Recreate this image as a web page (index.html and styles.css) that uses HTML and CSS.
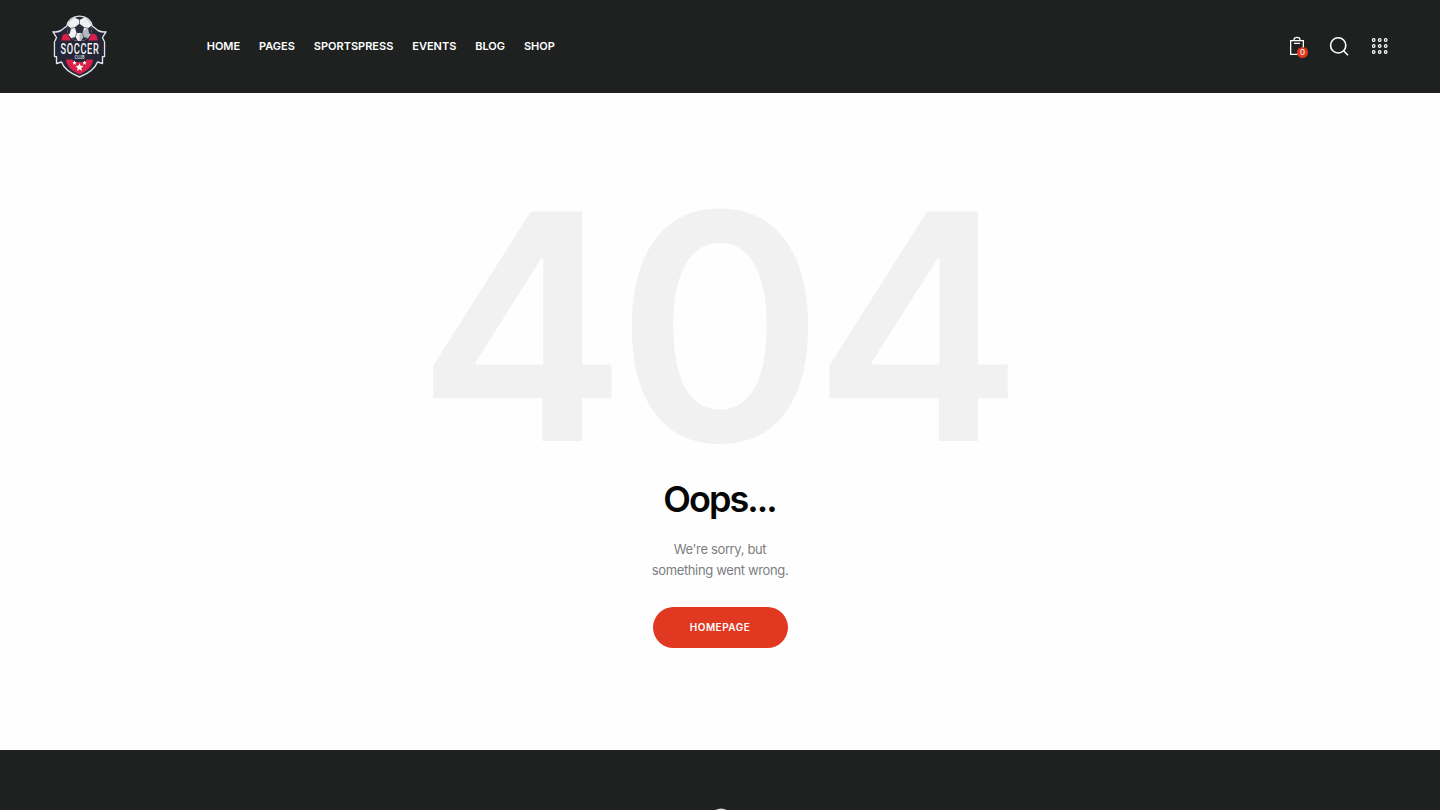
FILE: index.html
```html
<!DOCTYPE html>
<html lang="en">
<head>
<meta charset="utf-8">
<title>Soccer Club – Page not found</title>
<link rel="stylesheet" href="styles.css">
</head>
<body>
<header class="header">
  <a class="logo" aria-label="Soccer Club">
    <svg width="56" height="64" viewBox="0 0 56 64">
      <path d="M28.5 1.2C22 1.2 17 5 15.8 11L10 15.5Q6 17.5 2 16.8L5.5 22.5L3.5 27V41.5H5.5V48.5L10.5 47C13 54 21 59 28.5 62C36 59 44 54 46.5 47L51.5 48.5V41.5H53.5V27L51.5 22.5L55 16.8Q51 17.5 47 15.5L41.2 11C40 5 35 1.2 28.5 1.2Z" fill="#242638" stroke="#dfe2e8" stroke-width="1.4" stroke-linejoin="round"/>
      <path d="M10 25.5L12 19.5L16 18.5L20 25.5ZM47 25.5L45 19.5L41 18.5L37 25.5Z" fill="#d81f49"/>
      <path d="M15 44.5H21L24 47H33L36 44.5H42C42 51 36 56 28.5 59.5C21 56 15 51 15 44.5Z" fill="#d92049"/>
      <circle cx="28.5" cy="14" r="12.3" fill="#f1f1f2"/>
      <path d="M33 15L40.5 12.5Q41 20 35.5 24L28.5 26V19.5Z" fill="#b4b9bf"/>
      <path d="M28.5 8.8L33.2 12.3L31.4 18H25.6L23.8 12.3ZM24 2.8Q28.5 .8 33 2.8L28.5 5ZM16.3 10.5L20 13.3L18.8 18.8L17 19Q15.6 15 16.3 10.5ZM40.7 10.5L37 13.3L38.2 18.8L40 19Q41.4 15 40.7 10.5ZM20.5 23L24.5 22L27 26Q23 26 20.5 23ZM36.5 23L32.5 22L30 26Q34 26 36.5 23Z" fill="#2b2c3b"/>
      <path d="M28.5 4.5V9M20 13.3L24 12.5M37 13.3L33 12.5M25.8 17.8L24 22.5M31.2 17.8L33 22.5" stroke="#555966" stroke-width=".8"/>
      <path d="M4.5 26H52.5V41H4.5Z" fill="#242638"/>
      <text class="crest-name" transform="translate(9.5 39) scale(.66 1)" textLength="58">SOCCER</text>
      <text class="crest-sub" x="23.5" y="44" textLength="10" lengthAdjust="spacingAndGlyphs">CLUB</text>
      <path d="M28.5 48L29.6 50.8L32.5 51L30.3 52.9L31 56L28.5 54.3L26 56L26.7 52.9L24.5 51L27.4 50.8Z" fill="#fff"/>
      <path d="M23.5 45.5L24.1 47L25.5 47.2L24.5 48.3L24.7 49.8L23.5 49L22.3 49.8L22.5 48.3L21.5 47.2L22.9 47ZM33.5 45.5L34.1 47L35.5 47.2L34.5 48.3L34.7 49.8L33.5 49L32.3 49.8L32.5 48.3L31.5 47.2L32.9 47Z" fill="#fff"/>
    </svg>
  </a>
  <nav class="nav">
    <a>HOME</a><a>PAGES</a><a>SPORTSPRESS</a><a>EVENTS</a><a>BLOG</a><a>SHOP</a>
  </nav>
  <div class="tools">
    <a class="cart" aria-label="Cart">
      <svg width="16" height="20" viewBox="0 0 16 20" fill="none" stroke="#fff" stroke-width="1.3">
        <path d="M1.65 4.65H14.35V18.35H1.65ZM5 4.6V3.8Q5 1.4 8 1.4Q11 1.4 11 3.8V4.6M5 7.4H11"/>
      </svg>
      <span class="badge">0</span>
    </a>
    <svg class="search" width="20" height="20" viewBox="0 0 20 20" fill="none" stroke="#fff" stroke-width="1.6"><circle cx="9.2" cy="9.4" r="7.6"/><path d="M14.6 14.8L19 19.2"/></svg>
    <svg class="dots" width="16" height="16" viewBox="0 0 16 16" fill="none" stroke="#fff" stroke-width="1.2">
      <circle cx="1.7" cy="2" r="1.3"/><circle cx="7.7" cy="2" r="1.3"/><circle cx="13.7" cy="2" r="1.3"/>
      <circle cx="1.7" cy="8" r="1.3"/><circle cx="7.7" cy="8" r="1.3"/><circle cx="13.7" cy="8" r="1.3"/>
      <circle cx="1.7" cy="14" r="1.3"/><circle cx="7.7" cy="14" r="1.3"/><circle cx="13.7" cy="14" r="1.3"/>
    </svg>
  </div>
</header>
<main class="main">
  <h1 class="code">404</h1>
  <h2 class="title">Oops...</h2>
  <p class="message">We're sorry, but<br>something went wrong.</p>
  <a class="button">HOMEPAGE</a>
</main>
<footer class="footer">
  <svg width="24" height="24" viewBox="0 0 24 24"><circle cx="12" cy="12" r="11.5" fill="#d7d9d9"/></svg>
</footer>
</body>
</html>
```
FILE: styles.css
```css
* { box-sizing: border-box; }
body {
  margin: 0;
  height: 810px;
  overflow: hidden;
  background: #fefefe;
  font-family: Inter, "Liberation Sans", sans-serif;
}
.header {
  display: flex;
  align-items: center;
  height: 93px;
  padding: 0 52px 1px 51px;
  background: #1e2120;
}
.logo { display: flex; width: 155.7px; padding-top: 1px; }
.crest-name { font: 500 14px Roboto, sans-serif; fill: #f5f5f7; }
.crest-sub { font: 700 5px Roboto, sans-serif; fill: #c5c7d2; }
.nav {
  display: flex;
  gap: 18.9px;
  color: #fff;
  font-size: 11px;
  font-weight: 600;
  line-height: 16px;
}
.tools { display: flex; align-items: center; margin-left: auto; }
.cart { position: relative; display: flex; margin-right: 24px; }
.search { margin-right: 23px; }
.badge {
  position: absolute;
  left: 8px;
  top: 11px;
  width: 11px;
  height: 11px;
  border-radius: 50%;
  background: #df3821;
  color: #fff;
  font-size: 8px;
  line-height: 11px;
  text-align: center;
}
.main {
  display: flex;
  flex-direction: column;
  align-items: center;
  height: 657px;
  padding-top: 76px;
}
.code {
  margin: 0 11px 0 0;
  color: #f1f1f1;
  font-size: 315.5px;
  font-weight: 600;
  line-height: 315px;
  letter-spacing: -11px;
}
.title {
  margin: -8px 1px 0 0;
  color: #060606;
  font-size: 36px;
  font-weight: 600;
  line-height: 46px;
  letter-spacing: -2px;
}
.message {
  margin: 17px 0 0;
  color: #7c7e80;
  font-size: 13px;
  line-height: 21px;
  letter-spacing: -.36px;
  text-align: center;
}
.button {
  width: 135px;
  height: 41px;
  margin-top: 26px;
  border-radius: 21px;
  background: #e13821;
  color: #fff;
  font-size: 10px;
  font-weight: 600;
  line-height: 41px;
  letter-spacing: .5px;
  text-align: center;
}
.footer {
  display: flex;
  justify-content: center;
  height: 60px;
  padding: 58px 0 0 2px;
  background: #1e2120;
}
```
